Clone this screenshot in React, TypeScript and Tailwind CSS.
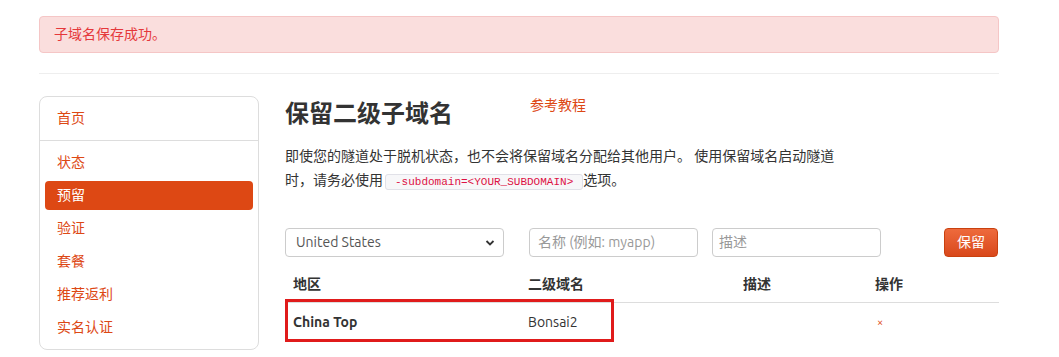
export default function App() {
  return (
    <div className="min-h-[357px] bg-white font-['Ubuntu','Noto_Sans','Noto_Sans_CJK_SC',sans-serif] text-[14px] text-[#333]">
      <div className="ml-[39px] w-[960px] pt-[16px]">
        <div className="h-[37px] rounded-[4px] border border-[#f5c6c6] bg-[#fadedd] px-[14px] text-[14px] leading-[35px] text-[#e5383b]">
          子域名保存成功。
        </div>
        <div className="mt-[20px] h-px bg-[#eeeeee]" />
        <div className="mt-[22px] flex">
          <Sidebar />
          <Main />
        </div>
      </div>
    </div>
  );
}

function Sidebar() {
  const items = ["状态", "预留", "验证", "套餐", "推荐返利", "实名认证"];
  return (
    <div className="w-[220px] h-[254px] shrink-0 rounded-[8px] border border-[#dddddd] px-[5px] pt-[7px]">
      <div className="h-[29px] px-[12px] leading-[29px] text-[#dd4814]">首页</div>
      <div className="mx-[-5px] my-[7px] h-px bg-[#dddddd]" />
      <div className="flex flex-col gap-[4px]">
        {items.map((t) => (
          <div
            key={t}
            className={`h-[29px] rounded-[4px] px-[12px] leading-[29px] ${
              t === "预留" ? "bg-[#dd4814] text-white" : "text-[#dd4814]"
            }`}
          >
            {t}
          </div>
        ))}
      </div>
    </div>
  );
}

function Main() {
  return (
    <div className="ml-[26px] flex-1">
      <div className="flex items-start">
        <h1 className="w-[245px] text-[24px] font-bold leading-[36px] text-[#333]">
          保留二级子域名
        </h1>
        <a className="mt-[-1px] text-[14px] leading-[20px] text-[#dd4814]">参考教程</a>
      </div>
      <p className="mt-[12px] w-[560px] text-[14px] leading-[24px] text-[#333]">
        即使您的隧道处于脱机状态，也不会将保留域名分配给其他用户。 使用保留域名启动隧道时，请务必使用
        <code className="ml-[2px] rounded-[3px] border border-[#e1e1e8] bg-[#f7f7f9] px-[9px] py-[1px] font-['Liberation_Mono',monospace] text-[11px] text-[#dd1144]">
          -subdomain=&lt;YOUR_SUBDOMAIN&gt;
        </code>
        选项。
      </p>
      <div className="mt-[34px] flex h-[29px] items-center">
        <div className="relative flex h-[29px] w-[219px] items-center rounded-[4px] border border-[#cccccc] px-[10px] text-[#555]">
          United States
          <svg className="absolute right-[8px] top-[10px]" width="10" height="8" viewBox="0 0 10 8">
            <path d="M1.5 2 L5 5.5 L8.5 2" fill="none" stroke="#333" strokeWidth="1.8" />
          </svg>
        </div>
        <div className="ml-[25px] flex h-[29px] w-[169px] items-center rounded-[4px] border border-[#cccccc] px-[8px] text-[#999]">
          名称 (例如: myapp)
        </div>
        <div className="ml-[14px] flex h-[29px] w-[169px] items-center rounded-[4px] border border-[#cccccc] px-[6px] text-[#999]">
          描述
        </div>
        <button className="ml-[63px] h-[29px] w-[54px] rounded-[4px] border border-[#c9410f] bg-gradient-to-b from-[#ee6a3c] to-[#d9481a] text-[14px] text-white">
          保留
        </button>
      </div>
      <div className="relative mt-[13px] w-[714px]">
        <div className="grid h-[33px] grid-cols-[235px_215px_132px_1fr] border-b border-[#dddddd] font-bold leading-[29px]">
          <div className="px-[8px]">地区</div>
          <div className="px-[8px]">二级域名</div>
          <div className="px-[8px]">描述</div>
          <div className="px-[8px]">操作</div>
        </div>
        <div className="grid h-[38px] grid-cols-[235px_215px_132px_1fr] items-center">
          <div className="px-[8px] font-bold">China Top</div>
          <div className="px-[8px]">Bonsai2</div>
          <div className="px-[8px]" />
          <div className="px-[8px] pl-[10px] text-[11px] text-[#dd4814]">×</div>
        </div>
        <div className="absolute left-0 top-[29px] h-[43px] w-[329px] border-[3px] border-[#e01b1b]" />
      </div>
    </div>
  );
}
